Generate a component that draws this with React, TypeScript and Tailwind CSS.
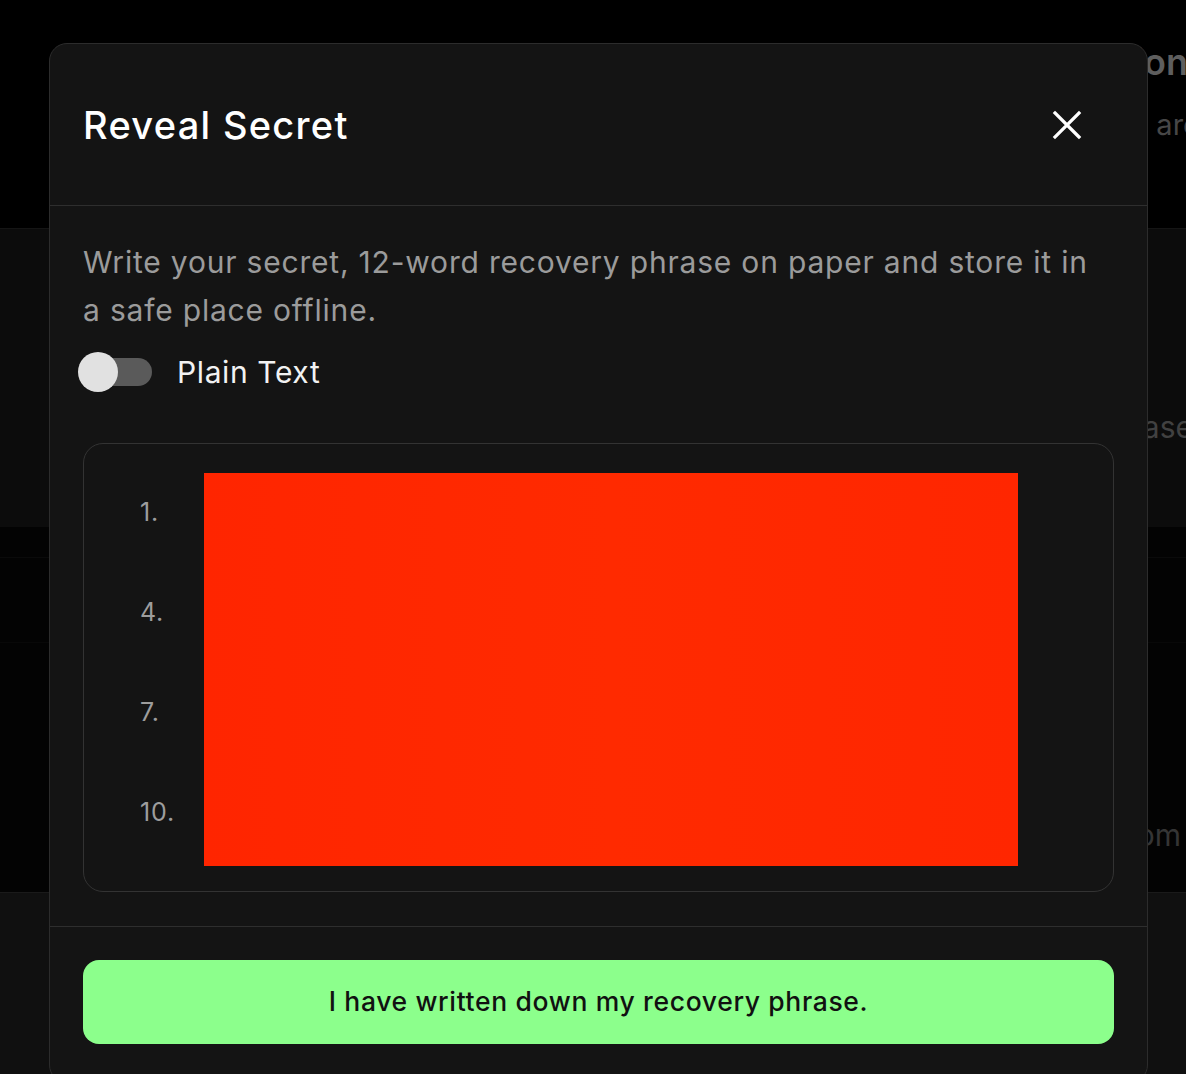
import { useState } from 'react'

const words = [1, 4, 7, 10]

function CloseIcon() {
  return (
    <svg width="30" height="30" viewBox="0 0 30 30" fill="none" stroke="currentColor" strokeWidth="3.2" strokeLinecap="square">
      <path d="M3 3 L27 27 M27 3 L3 27" />
    </svg>
  )
}

function BackgroundPage() {
  return (
    <div className="flex flex-col h-full">
      <div className="h-[228px] flex flex-col w-[1188px]">
        <div className="h-[40px] mt-[42px] text-right text-[36px] leading-[40px] font-semibold text-[#5e5e5e] whitespace-nowrap">
          Backup Option
        </div>
        <div className="h-[36px] mt-[25px] text-right text-[29px] leading-[36px] text-[#474747] whitespace-nowrap w-[1200px]">
          Your words are
        </div>
      </div>
      <div className="h-[299px] bg-[#0c0c0c] border-t border-[#151515] flex flex-col w-[1200px]">
        <div className="mt-[180px] text-right text-[30px] leading-[36px] text-[#414141] whitespace-nowrap w-[1193px]">
          Secret Passphrase
        </div>
      </div>
      <div className="h-[365px] bg-[#030303] flex flex-col">
        <div className="h-[31px] border-b border-[#0a0a0a]" />
        <div className="h-[85px] border-b border-[#080808]" />
        <div className="mt-[174px] text-right text-[30px] leading-[36px] text-[#353535] whitespace-nowrap w-[1181px]">
          Import from
        </div>
      </div>
      <div className="flex-1 bg-[#101010] border-t border-[#1a1a1a]" />
    </div>
  )
}

export default function App() {
  const [plain, setPlain] = useState(false)

  return (
    <div className="relative w-full h-[1074px] overflow-hidden bg-black font-['Inter','Noto_Sans',sans-serif]">
      <BackgroundPage />

      <div className="absolute left-[49px] top-[43px] w-[1099px] h-[1040px] bg-[#141414] border border-[#2c2c2c] rounded-[18px] flex flex-col">
        <div className="h-[162px] flex items-center justify-between pl-[33px] pr-[65px] border-b border-[#2e2e2e]">
          <h2 className="text-[38px] leading-[44px] font-medium text-white tracking-[1.3px]">Reveal Secret</h2>
          <button className="text-white">
            <CloseIcon />
          </button>
        </div>

        <div className="flex flex-col px-[33px] pt-[32px] pb-[34px] border-b border-[#2e2e2e]">
          <p className="max-w-[1020px] text-[30px] leading-[48px] text-[#9b9b9b] tracking-[0.8px]">
            Write your secret, 12-word recovery phrase on paper and store it in a safe place offline.
          </p>

          <div className="mt-[18px] flex items-center h-[40px]">
            <button onClick={() => setPlain(!plain)} className="relative w-[74px] h-[40px] ml-[-5px]">
              <span className="absolute left-[15px] top-[6px] w-[59px] h-[28px] rounded-full bg-[#5a5a5a]" />
              <span className="absolute left-0 top-0 w-[40px] h-[40px] rounded-full bg-[#e1e1e1]" />
            </button>
            <span className="ml-[25px] text-[30px] leading-[40px] text-[#f2f2f2] tracking-[0.6px]">Plain Text</span>
          </div>

          <div className="mt-[51px] h-[449px] rounded-[20px] border border-[#333333] flex items-start pt-[29px] pl-[56px]">
            <div className="w-[64px] flex flex-col gap-[72px] pt-[25px]">
              {words.map((n) => (
                <span key={n} className="text-[25px] leading-[28px] text-[#9d9d9d] tracking-[0.8px]">
                  {n}.
                </span>
              ))}
            </div>
            <div className="w-[814px] h-[393px] bg-gradient-to-r from-[#ff2500] via-[#ff2a00] to-[#ff2600]" />
          </div>
        </div>

        <div className="px-[33px] pt-[33px]">
          <button className="w-full h-[84px] rounded-[16px] bg-[#8cff8c] text-[#111111] text-[26.5px] font-medium tracking-[0.65px]">
            I have written down my recovery phrase.
          </button>
        </div>
      </div>
    </div>
  )
}
